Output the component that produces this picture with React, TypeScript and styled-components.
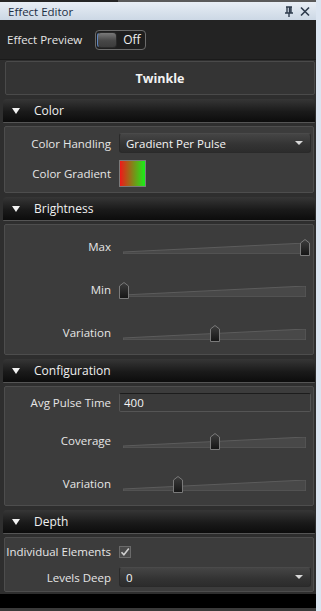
import { createGlobalStyle } from 'styled-components';
import styled from 'styled-components';

const GlobalStyle = createGlobalStyle`
  html, body {
    margin: 0;
    padding: 0;
    background-color: #dbe5f1;
  }
  * {
    box-sizing: border-box;
  }
`;

const Window = styled.div`
  width: 321px;
  height: 611px;
  display: flex;
  background-color: #dbe5f1;
  font-family: 'Open Sans', 'Noto Sans', sans-serif;
  font-size: 11.5px;
  color: #e6e6e6;
  overflow: hidden;
`;

const Panel = styled.div`
  width: 316px;
  display: flex;
  flex-direction: column;
  background-color: #2e2e2e;
`;

const TopEdge = styled.div`
  height: 2px;
  background: linear-gradient(to right, #262626 0, #262626 118px, #5a5a5a 118px);
`;

const TitleBar = styled.div`
  height: 18px;
  display: flex;
  align-items: center;
  padding: 0 6px 0 8px;
  background: linear-gradient(#e8eef5, #ccd8e5);
  color: #1e2f45;

  .title {
    flex: 1;
  }
`;

const TitleIcon = styled.svg`
  width: 10px;
  height: 11px;
  margin-left: 6px;
`;

const PreviewRow = styled.div`
  height: 40px;
  display: flex;
  align-items: center;
  gap: 13px;
  padding-left: 7px;
  background-color: #232323;
  border-bottom: 1px solid #1a1a1a;
`;

const Toggle = styled.div`
  width: 51px;
  height: 20px;
  display: flex;
  align-items: center;
  gap: 6px;
  padding: 1px;
  border: 1px solid #6b6b6b;
  border-radius: 4px;
  background-color: #1e1e1e;
  color: #f0f0f0;
  font-size: 12px;
`;

const Knob = styled.div`
  width: 20px;
  height: 16px;
  border-radius: 4px;
  border: 1px solid #2a2a2a;
  border-left: 1px solid #5f86c0;
  background: linear-gradient(#7a7a7a, #474747 55%, #3c3c3c);
`;

const EffectButton = styled.div`
  height: 34px;
  margin: 1px 1px 4px 5px;
  display: flex;
  align-items: center;
  justify-content: center;
  background-color: #343434;
  border: 1px solid #4a4a4a;
  border-radius: 2px;
  font-weight: 700;
  font-size: 12.5px;
  color: #f2f2f2;
`;

const Section = styled.div`
  display: flex;
  flex-direction: column;
  margin-bottom: 4px;
`;

const SectionHeader = styled.div`
  height: 24px;
  margin: 0 1px 0 3px;
  display: flex;
  align-items: center;
  gap: 14px;
  padding-left: 9px;
  border-radius: 4px 4px 1px 1px;
  background: linear-gradient(#363636, #1a1a1a 55%, #0c0c0c);
  border-bottom: 1px solid #555;
  color: #f0f0f0;
  font-size: 12px;
`;

const Caret = styled.span`
  width: 0;
  height: 0;
  border-left: 4px solid transparent;
  border-right: 4px solid transparent;
  border-top: 6px solid #f2f2f2;
`;

const SectionBody = styled.div<{ $pad?: string; $gap?: number }>`
  margin: 3px 2px 0 4px;
  display: flex;
  flex-direction: column;
  gap: ${(p) => p.$gap ?? 0}px;
  padding: ${(p) => p.$pad ?? '0'};
  background-color: #3c3c3c;
  border: 1px solid #4d4d4d;
  border-radius: 2px;
`;

const Row = styled.div<{ $h: number }>`
  height: ${(p) => p.$h}px;
  display: grid;
  grid-template-columns: 106px 1fr;
  column-gap: 8px;
  align-items: center;
  padding-right: 2px;
`;

const Label = styled.span`
  text-align: right;
  white-space: nowrap;
`;

const Dropdown = styled.div`
  height: 20px;
  display: flex;
  align-items: center;
  justify-content: space-between;
  padding: 0 7px 0 6px;
  border-radius: 3px;
  border: 1px solid #2a2a2a;
  border-top-color: #4a4a4a;
  background: linear-gradient(#454545, #333 60%, #2c2c2c);
  color: #f4f4f4;
`;

const DropArrow = styled.span`
  width: 0;
  height: 0;
  border-left: 4px solid transparent;
  border-right: 4px solid transparent;
  border-top: 4px solid #d8d8d8;
`;

const TextBox = styled.div`
  height: 19px;
  display: flex;
  align-items: center;
  padding-left: 4px;
  border: 1px solid #555;
  border-top: 1px solid #1c1c1c;
  border-radius: 2px;
  background-color: #3a3a3a;
  color: #f4f4f4;
`;

const Swatch = styled.div`
  width: 27px;
  height: 27px;
  border: 1px solid #7a7a7a;
  background: linear-gradient(to right, #f01818, #18f018);
`;

const SliderBox = styled.div`
  position: relative;
  height: 16px;
`;

const Wedge = styled.svg`
  position: absolute;
  left: 4px;
  right: 5px;
  bottom: 1px;
  height: 11px;
  width: calc(100% - 9px);
`;

const Thumb = styled.svg`
  position: absolute;
  top: 0;
  width: 10px;
  height: 17px;
  margin-left: -5px;
`;

const CheckBox = styled.svg`
  width: 12px;
  height: 12px;
`;

const BottomBar = styled.div`
  margin-top: -2px;
  height: 14px;
  background-color: #000;
`;

const BottomEdge = styled.div`
  flex: 1;
  background-color: #3a3a3a;
`;

const Slider = ({ value }: { value: number }) => (
  <SliderBox>
    <Wedge viewBox="0 0 182 11" preserveAspectRatio="none">
      <polygon points="0,9 182,0 182,11 0,11" fill="#484848" stroke="#5c5c5c" strokeWidth="1" vectorEffect="non-scaling-stroke" />
    </Wedge>
    <Thumb viewBox="0 0 10 17" style={{ left: `calc(5px + (100% - 11px) * ${value})` }}>
      <defs>
        <linearGradient id="thumbFill" x1="0" y1="0" x2="0" y2="1">
          <stop offset="0" stopColor="#3e3e3e" />
          <stop offset="1" stopColor="#151515" />
        </linearGradient>
      </defs>
      <polygon points="5,0.5 9.5,4 9.5,16.5 0.5,16.5 0.5,4" fill="url(#thumbFill)" stroke="#7a7a7a" strokeWidth="1" />
    </Thumb>
  </SliderBox>
);

const Header = ({ title }: { title: string }) => (
  <SectionHeader>
    <Caret />
    <span>{title}</span>
  </SectionHeader>
);

const App = () => {
  return (
    <>
      <GlobalStyle />
      <Window>
        <Panel>
          <TopEdge />
          <TitleBar>
            <span className="title">Effect Editor</span>
            <TitleIcon viewBox="0 0 10 11">
              <path d="M2 1h6M3 1v6M7 1v6M5.5 1v6M1 7h8M5 7v4" stroke="#2e3b4c" strokeWidth="1.4" fill="none" />
            </TitleIcon>
            <TitleIcon viewBox="0 0 10 11">
              <path d="M1 1.5l8 8M9 1.5l-8 8" stroke="#2e3b4c" strokeWidth="1.6" fill="none" />
            </TitleIcon>
          </TitleBar>

          <PreviewRow>
            <span>Effect Preview</span>
            <Toggle>
              <Knob />
              <span>Off</span>
            </Toggle>
          </PreviewRow>

          <EffectButton>Twinkle</EffectButton>

          <Section>
            <Header title="Color" />
            <SectionBody $pad="6px 0 5px 0" $gap={7}>
              <Row $h={20}>
                <Label>Color Handling</Label>
                <Dropdown>
                  <span>Gradient Per Pulse</span>
                  <DropArrow />
                </Dropdown>
              </Row>
              <Row $h={27}>
                <Label>Color Gradient</Label>
                <Swatch />
              </Row>
            </SectionBody>
          </Section>

          <Section>
            <Header title="Brightness" />
            <SectionBody>
              <Row $h={43}>
                <Label>Max</Label>
                <Slider value={1} />
              </Row>
              <Row $h={43}>
                <Label>Min</Label>
                <Slider value={0} />
              </Row>
              <Row $h={43}>
                <Label>Variation</Label>
                <Slider value={0.5} />
              </Row>
            </SectionBody>
          </Section>

          <Section>
            <Header title="Configuration" />
            <SectionBody $pad="5px 0 0 0" $gap={7}>
              <Row $h={20}>
                <Label>Avg Pulse Time</Label>
                <TextBox>400</TextBox>
              </Row>
              <div>
                <Row $h={43}>
                  <Label>Coverage</Label>
                  <Slider value={0.5} />
                </Row>
                <Row $h={43}>
                  <Label>Variation</Label>
                  <Slider value={0.3} />
                </Row>
              </div>
            </SectionBody>
          </Section>

          <Section>
            <Header title="Depth" />
            <SectionBody $pad="6px 0 4px 0" $gap={9}>
              <Row $h={14}>
                <Label>Individual Elements</Label>
                <CheckBox viewBox="0 0 12 12">
                  <rect x="0.5" y="0.5" width="11" height="11" fill="#4a4a4a" stroke="#6a6a6a" />
                  <path d="M2.5 6.2l2.4 2.6L9.8 2.5" stroke="#d0d0d0" strokeWidth="1.6" fill="none" />
                </CheckBox>
              </Row>
              <Row $h={20}>
                <Label>Levels Deep</Label>
                <Dropdown>
                  <span>0</span>
                  <DropArrow />
                </Dropdown>
              </Row>
            </SectionBody>
          </Section>

          <BottomBar />
          <BottomEdge />
        </Panel>
      </Window>
    </>
  );
};

export default App;
